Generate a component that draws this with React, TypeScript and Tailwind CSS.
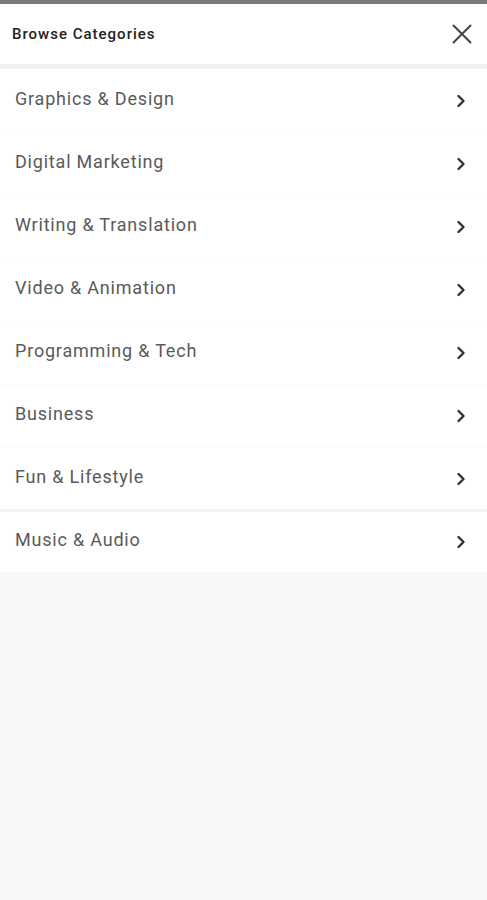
import React from "react";

const items = [
  "Graphics & Design",
  "Digital Marketing",
  "Writing & Translation",
  "Video & Animation",
  "Programming & Tech",
  "Business",
  "Fun & Lifestyle",
];

function Chevron() {
  return (
    <svg width="10" height="14" viewBox="0 0 10 14" fill="none">
      <path d="M2.5 2 L7.5 7 L2.5 12" stroke="#333" strokeWidth="2.4" strokeLinecap="round" strokeLinejoin="round" />
    </svg>
  );
}

function Row({ label, h, border }: { label: string; h: string; border?: boolean }) {
  return (
    <div className={`${h} bg-white flex items-center justify-between pl-[15px] pr-[21px] ${border ? "border-t border-[#fafafa]" : ""}`}>
      <span className="text-[18px] tracking-[0.8px] text-[#5a5a5a] pb-[5px]">{label}</span>
      <Chevron />
    </div>
  );
}

export default function App() {
  return (
    <div className="w-[487px] h-[900px] bg-[#f8f8f8] flex flex-col" style={{ fontFamily: "Roboto, 'Liberation Sans', sans-serif" }}>
      <div className="h-[4px] bg-[#7a7a7a]" />
      <div className="h-[60px] bg-white flex items-center justify-between pl-[12px] pr-[14px]">
        <span className="text-[15px] font-medium tracking-[1px] text-[#222]">Browse Categories</span>
        <svg width="22" height="22" viewBox="0 0 22 22" fill="none">
          <path d="M2.5 2.5 L19.5 19.5 M19.5 2.5 L2.5 19.5" stroke="#444" strokeWidth="2" strokeLinecap="round" />
        </svg>
      </div>
      <div className="h-[5px] bg-[#efefef]" />
      <div className="flex flex-col">
        {items.map((it, i) => (
          <Row key={it} label={it} h={i === 6 ? "h-[62px]" : "h-[63px]"} border={i > 0} />
        ))}
        <div className="h-[3px] bg-[#f3f3f3]" />
        <Row label="Music & Audio" h="h-[60px]" />
      </div>
    </div>
  );
}
